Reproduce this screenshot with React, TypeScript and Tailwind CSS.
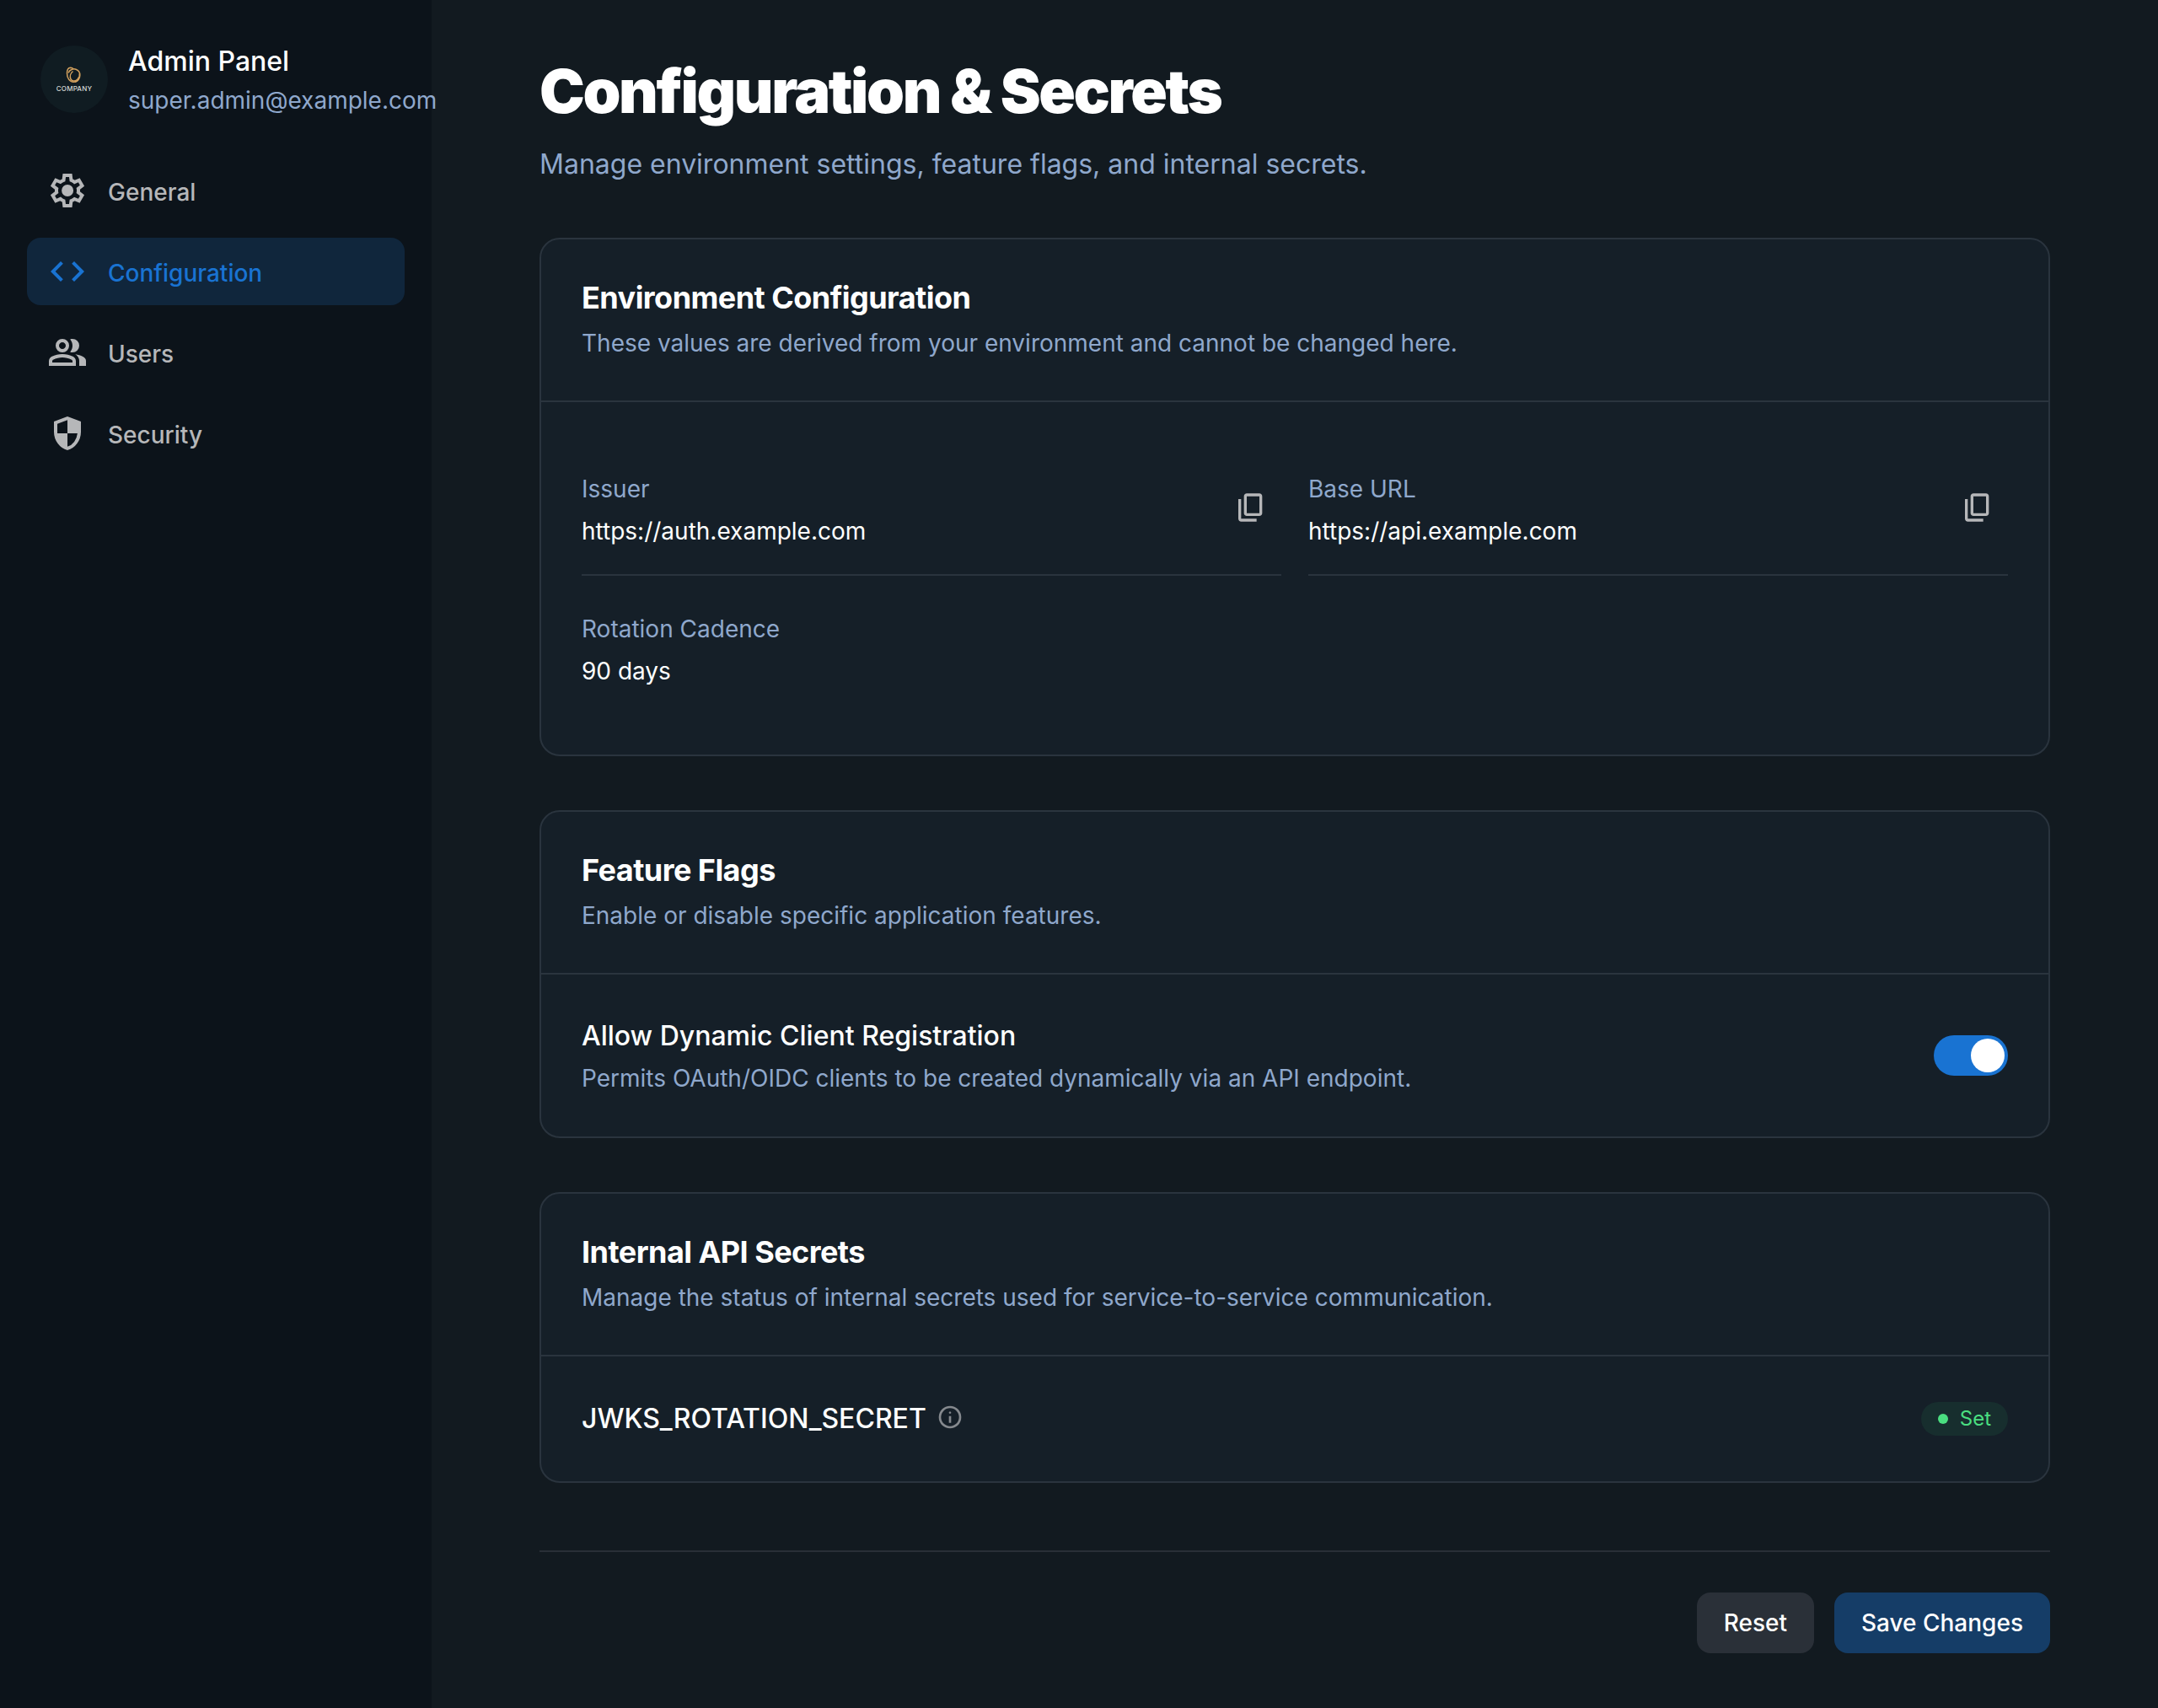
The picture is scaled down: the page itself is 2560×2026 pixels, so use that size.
import { useState } from "react";
import type { ReactNode } from "react";

const icons = {
  settings:
    "m370-80-16-128q-13-5-24.500-12T307-235l-119 50L78-375l103-78q-1-7-1-13.500v-27q0-6.500 1-13.500L78-585l110-190 119 50q11-8 23-15t24-12l16-128h220l16 128q13 5 24.500 12t22.500 15l119-50 110 190-103 78q1 7 1 13.500v27q0 6.500-2 13.500l103 78-110 190-118-50q-11 8-23 15t-24 12L590-80H370Zm70-80h79l14-106q31-8 57.500-23.500T639-327l99 41 39-68-86-65q5-14 7-29.500t2-31.500q0-16-2-31.500t-7-29.500l86-65-39-68-99 42q-22-23-48.500-38.500T533-694l-13-106h-79l-14 106q-31 8-57.500 23.500T321-633l-99-41-39 68 86 64q-5 15-7 30t-2 32q0 16 2 31t7 30l-86 65 39 68 99-42q22 23 48.500 38.500T427-266l13 106Zm42-180q58 0 99-41t41-99q0-58-41-99t-99-41q-59 0-99.500 41T342-480q0 58 40.500 99t99.500 41Z",
  code: "M320-240 80-480l240-240 57 57-184 184 183 183-56 56Zm320 0-57-57 184-184-183-183 56-56 240 240-240 240Z",
  group:
    "M40-160v-112q0-34 17.500-62.500T104-378q62-31 126-46.500T360-440q66 0 130 15.500T616-378q29 15 46.500 43.500T680-272v112H40Zm720 0v-120q0-44-24.500-84.500T666-434q51 6 96 20.500t84 35.500q36 20 55 44.500t19 53.500v120H760ZM360-480q-66 0-113-47t-47-113q0-66 47-113t113-47q66 0 113 47t47 113q0 66-47 113t-113 47Zm400-160q0 66-47 113t-113 47q-11 0-28-2.500t-28-5.500q27-32 41.500-71t14.500-81q0-42-14.500-81T544-792q14-5 28-6.500t28-1.500q66 0 113 47t47 113ZM120-240h480v-32q0-11-5.500-20T580-306q-54-27-109-40.500T360-360q-56 0-111 13.500T140-306q-9 5-14.500 14t-5.500 20v32Zm240-320q33 0 56.500-23.500T440-640q0-33-23.500-56.500T360-720q-33 0-56.500 23.500T280-640q0 33 23.500 56.500T360-560Z",
  security:
    "M480-80q-139-35-229.500-159.500T160-516v-244l320-120 320 120v244q0 152-90.500 276.500T480-80Zm0-84q97-30 162-118.500T718-480H480v-315l-240 90v207q0 7 2 18h238v316Z",
  copy: "M360-240q-33 0-56.500-23.500T280-320v-480q0-33 23.500-56.500T360-880h360q33 0 56.500 23.500T800-800v480q0 33-23.500 56.500T720-240H360Zm0-80h360v-480H360v480ZM200-80q-33 0-56.500-23.500T120-160v-560h80v560h440v80H200Z",
  info: "M440-280h80v-240h-80v240Zm40-320q17 0 28.500-11.500T520-640q0-17-11.500-28.500T480-680q-17 0-28.500 11.500T440-640q0 17 11.500 28.500T480-600Zm0 520q-83 0-156-31.500T197-197q-54-54-85.500-127T80-480q0-83 31.500-156T197-763q54-54 127-85.500T480-880q83 0 156 31.500T763-763q54 54 85.500 127T880-480q0 83-31.500 156T763-197q-54 54-127 85.500T480-80Zm0-80q134 0 227-93t93-227q0-134-93-227t-227-93q-134 0-227 93t-93 227q0 134 93 227t227 93Z",
};

type IconName = keyof typeof icons;

function Icon({ name, className }: { name: IconName; className: string }) {
  return (
    <svg viewBox="0 -960 960 960" fill="currentColor" className={className} aria-hidden="true">
      <path d={icons[name]} />
    </svg>
  );
}

const navItems: { label: string; icon: IconName; active: boolean }[] = [
  { label: "General", icon: "settings", active: false },
  { label: "Configuration", icon: "code", active: true },
  { label: "Users", icon: "group", active: false },
  { label: "Security", icon: "security", active: false },
];

function CompanyLogo() {
  return (
    <div className="flex size-20 shrink-0 flex-col items-center justify-center gap-0.5 rounded-full bg-[#101c22]">
      <svg viewBox="0 0 20 20" className="size-5" fill="none" stroke="#d3a15e" strokeWidth="1.500" aria-hidden="true">
        <path d="M16.300 8.500c.8 5-2.500 9.700-7 9.700C4.500 18 1.500 13.500 1.500 8 1.500 4 3 1.500 5.500 1.300c2 0 3.200.8 3.500 2" />
        <path d="M3 7.500C4.500 3.500 9 2.200 12 3.200c3 1 4.800 3.800 4.800 7 0 4-2.500 7.500-6 8" />
        <path d="M8.500 5.500C5.500 8 4.500 12 6 15c1.500 2.500 5 2.500 7.500.5 1-.8 1.700-2 2-3" />
      </svg>
      <span className="text-[8px] leading-2 font-medium tracking-wide text-[#d5d8d6]">COMPANY</span>
    </div>
  );
}

function Card({ title, description, children }: { title: string; description: string; children: ReactNode }) {
  return (
    <section className="rounded-3xl border-2 border-[#2a343e] bg-[#151f28]">
      <header className="border-b-2 border-[#2a343e] px-12 pt-12 pb-[47px]">
        <h2 className="text-4xl leading-[42px] font-bold tracking-[-0.015em] text-white">{title}</h2>
        <p className="mt-3 text-[28px] leading-[42px] text-[#8fa8cc]">{description}</p>
      </header>
      {children}
    </section>
  );
}

function Field({ label, value, copy }: { label: string; value: string; copy?: boolean }) {
  return (
    <div
      className={
        copy
          ? "flex items-center justify-between border-b-2 border-[#2a343e] pt-[34px] pb-[30px]"
          : "flex items-center justify-between pt-[34px] pb-[30px]"
      }
    >
      <dl className="flex flex-col gap-2">
        <dt className="text-[28px] leading-[42px] text-[#8fa8cc]">{label}</dt>
        <dd className="text-[28px] leading-[42px] text-white">{value}</dd>
      </dl>
      {copy && (
        <button type="button" aria-label={`Copy ${label}`} className="mb-1.5 rounded-full p-4 text-[#b6b7b9]">
          <Icon name="copy" className="size-10" />
        </button>
      )}
    </div>
  );
}

export default function App() {
  const [enabled, setEnabled] = useState(true);

  return (
    <div className="flex min-h-screen bg-[#121a20] font-['Inter',sans-serif]">
      <aside className="w-lg shrink-0 bg-[#0c131a] p-8">
        <div className="flex items-center gap-6 p-4">
          <CompanyLogo />
          <div className="flex flex-col">
            <span className="text-[32px] leading-[50px] font-medium text-white">Admin Panel</span>
            <span className="relative text-[28px] leading-[42px] text-[#8fa8cc]">super.admin@example.com</span>
          </div>
        </div>
        <nav className="mt-[30px] flex flex-col gap-4">
          {navItems.map(({ label, icon, active }) => (
            <a
              key={label}
              href={`#${label.toLowerCase()}`}
              aria-current={active ? "page" : undefined}
              className={
                active
                  ? "flex items-center gap-6 rounded-2xl bg-[#10263c] px-6 py-4 text-[#1973d2]"
                  : "flex items-center gap-6 rounded-2xl px-6 py-4 text-[#b6b7b9]"
              }
            >
              <Icon name={icon} className="size-12" />
              <span className="pt-1 text-[28px] leading-[42px] font-medium">{label}</span>
            </a>
          ))}
        </nav>
      </aside>

      <main className="min-w-0 flex-1 px-32 py-16">
        <header className="mb-[62px]">
          <h1 className="text-7xl leading-[88px] font-black tracking-[-0.033em] text-white">
            Configuration &amp; Secrets
          </h1>
          <p className="mt-[18px] text-[32px] leading-[50px] text-[#8fa8cc]">
            Manage environment settings, feature flags, and internal secrets.
          </p>
        </header>

        <div className="flex flex-col gap-16">
          <Card
            title="Environment Configuration"
            description="These values are derived from your environment and cannot be changed here."
          >
            <div className="grid grid-cols-2 gap-x-8 gap-y-2 p-12">
              <Field label="Issuer" value="https://auth.example.com" copy />
              <Field label="Base URL" value="https://api.example.com" copy />
              <Field label="Rotation Cadence" value="90 days" />
            </div>
          </Card>

          <Card title="Feature Flags" description="Enable or disable specific application features.">
            <div className="flex items-center justify-between p-12">
              <label htmlFor="dcr" className="flex flex-col gap-1">
                <span className="text-[32px] leading-[50px] font-medium text-white">
                  Allow Dynamic Client Registration
                </span>
                <span className="text-[28px] leading-[42px] text-[#8fa8cc]">
                  Permits OAuth/OIDC clients to be created dynamically via an API endpoint.
                </span>
              </label>
              <input
                id="dcr"
                type="checkbox"
                role="switch"
                checked={enabled}
                onChange={(e) => setEnabled(e.target.checked)}
                className="flex h-12 w-22 shrink-0 appearance-none items-center rounded-full bg-gray-600 p-1 before:size-10 before:rounded-full before:bg-white checked:justify-end checked:bg-[#1973d2]"
              />
            </div>
          </Card>

          <Card
            title="Internal API Secrets"
            description="Manage the status of internal secrets used for service-to-service communication."
          >
            <div className="flex items-center justify-between p-12">
              <div className="flex items-center gap-3">
                <span className="text-[32px] leading-[52px] font-medium text-white">JWKS_ROTATION_SECRET</span>
                <button type="button" aria-label="About this secret" className="mb-1 text-[#85898e]">
                  <Icon name="info" className="size-8" />
                </button>
              </div>
              <span className="flex items-center gap-3.5 rounded-full bg-[#172e2e] px-5 text-2xl leading-10 text-[#4ade80]">
                <span className="size-3 rounded-full bg-[#4ade80]" />
                Set
              </span>
            </div>
          </Card>
        </div>

        <footer className="mt-20 flex justify-end gap-6 border-t-2 border-[#292f37] pt-12">
          <button type="button" className="h-18 rounded-2xl bg-[#2a3038] px-8 text-[28px] font-medium text-white">
            Reset
          </button>
          <button type="button" className="h-18 rounded-2xl bg-[#153d67] px-8 text-[28px] font-medium text-white">
            Save Changes
          </button>
        </footer>
      </main>
    </div>
  );
}
